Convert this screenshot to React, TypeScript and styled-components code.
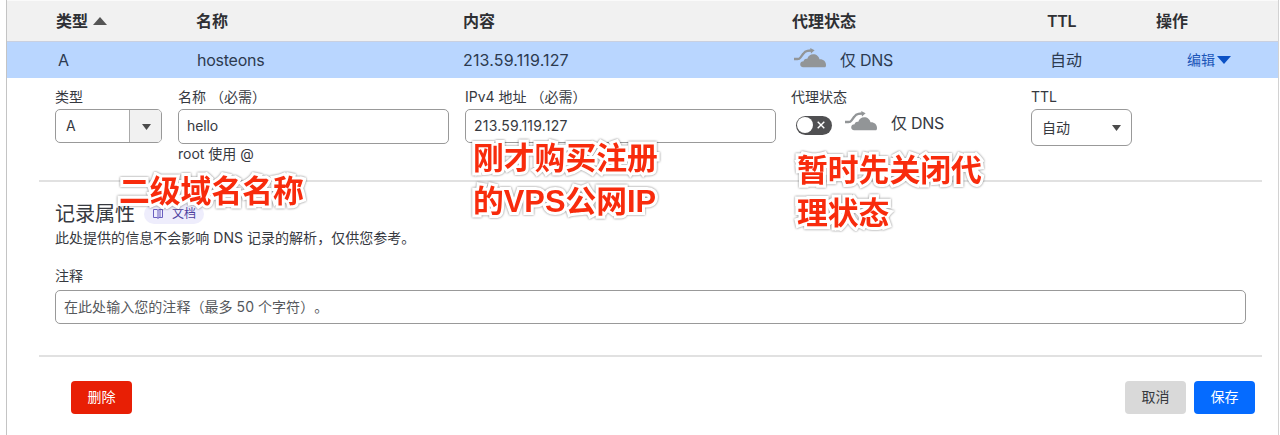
import React from 'react';
import styled, { createGlobalStyle } from 'styled-components';

const GlobalStyle = createGlobalStyle`
  *, *::before, *::after { box-sizing: border-box; }
  body {
    margin: 0;
    background: #fff;
    color: #36393f;
    font-family: Inter, 'Noto Sans CJK SC', sans-serif;
    font-size: 14px;
    line-height: 20px;
    text-spacing-trim: space-all;
    overflow: hidden;
  }
  input, button { font: inherit; color: inherit; margin: 0; }
`;

const Page = styled.main`
  position: relative;
  height: 435px;
  padding: 0 1px 0 6px;
  overflow: hidden;
`;

const Panel = styled.section`
  height: 435px;
  border-left: 1px solid #c4c4c4;
  border-right: 1px solid #d2d2d2;
`;

const Row = styled.div`
  display: grid;
  grid-template-columns: 140px 266px 329px 255px 109px 1fr;
  align-items: center;
  padding-left: 50px;
  font-size: 16px;
  line-height: 24px;
`;

const HeaderRow = styled(Row)`
  height: 42px;
  padding-left: 49px;
  border-top: 1px solid #fafafa;
  border-bottom: 1px solid #c9d0e0;
  background: #f1f1f1;
  color: #2f3034;
  font-weight: 600;
`;

const RecordRow = styled(Row)`
  height: 36px;
  background: #b9d6ff;
  color: #2c3a50;
`;

const Cell = styled.div<{ $indent?: number; $tracking?: number }>`
  display: flex;
  align-items: center;
  padding-left: ${({ $indent = 0 }) => $indent}px;
  letter-spacing: ${({ $tracking = 0 }) => $tracking}px;
  white-space: nowrap;
`;

const EditLink = styled.a`
  display: flex;
  align-items: center;
  gap: 2px;
  color: #1b55b8;
  font-size: 14px;
`;

const Triangle = styled.svg<{ $w: number; $h: number }>`
  display: block;
  flex: none;
  width: ${({ $w }) => $w}px;
  height: ${({ $h }) => $h}px;
`;

const HeaderLabel = styled.span`
  display: flex;
  align-items: center;
  gap: 5px;
`;

const Status = styled.div`
  display: flex;
  align-items: center;
  gap: 13px;
  font-size: 16px;
  line-height: 24px;
  letter-spacing: -0.3px;
`;

const CloudSvg = styled.svg`
  display: block;
  width: 33px;
  height: 21px;
  margin-top: -5px;
`;

const Form = styled.div`
  margin: 0 16px 0 32px;
`;

const Fields = styled.div`
  display: flex;
  align-items: flex-start;
  height: 104px;
  padding: 9px 0 0 16px;
  border-bottom: 2px solid #e1e1e1;
`;

const Field = styled.div<{ $w: number; $gap: number }>`
  flex: none;
  width: ${({ $w }) => $w}px;
  margin-right: ${({ $gap }) => $gap}px;
  white-space: nowrap;
`;

const Label = styled.label`
  display: block;
  height: 22px;
`;

const TextInput = styled.input<{ $h?: number; $tracking?: number }>`
  display: block;
  width: 100%;
  height: ${({ $h = 34 }) => $h}px;
  padding: 0 8px 1px;
  border: 1px solid #999;
  border-radius: 5px;
  background: #fff;
  letter-spacing: ${({ $tracking = 0 }) => $tracking}px;
  text-spacing-trim: space-all;
  outline: none;
  &::placeholder { color: #55585c; opacity: 1; }
`;

const NameInput = styled(TextInput)`
  padding-bottom: 2px;
`;

const ComboBox = styled.div`
  display: flex;
  height: 34px;
  border: 1px solid #999;
  border-radius: 5px;
  overflow: hidden;
`;

const ComboValue = styled.span`
  flex: 1;
  padding: 6px 0 0 10px;
`;

const ComboToggle = styled.button`
  display: flex;
  align-items: center;
  justify-content: center;
  width: 32px;
  padding: 2px 0 0 1px;
  border: 0;
  border-left: 1px solid #aaa;
  background: #f1f1f1;
`;

const Select = styled.div`
  display: flex;
  align-items: center;
  justify-content: space-between;
  height: 37px;
  padding: 0 10px 0 10px;
  border: 1px solid #999;
  border-radius: 6px;
`;

const Hint = styled.div`
  color: #36393f;
`;

const ProxyControls = styled.div`
  display: flex;
  align-items: center;
  padding: 0 0 0 5px;
  height: 28px;
`;

const Toggle = styled.button`
  display: flex;
  align-items: center;
  justify-content: space-between;
  width: 36px;
  height: 19px;
  margin: 4px 13px 0 0;
  padding: 0 7px 0 1px;
  border: 0;
  border-radius: 10px;
  background: #505052;
`;

const Knob = styled.span`
  width: 16px;
  height: 16px;
  border-radius: 50%;
  background: #fff;
`;

const Attributes = styled.div`
  height: 175px;
  padding: 17px 16px 0;
  border-bottom: 2px solid #e1e1e1;
`;

const TitleLine = styled.div`
  display: flex;
  align-items: center;
  height: 29px;
  gap: 9px;
`;

const Title = styled.h2`
  margin: 0;
  font-size: 20px;
  font-weight: 400;
  line-height: 28px;
`;

const DocsBadge = styled.a`
  display: flex;
  align-items: center;
  gap: 8px;
  height: 20px;
  padding: 0 8px;
  border-radius: 10px;
  background: #eeedfc;
  color: #4d3f9f;
  font-size: 12px;
`;

const Description = styled.p`
  margin: 0 0 17px;
  letter-spacing: 0.03px;
`;

const CommentLabel = styled(Label)`
  height: 25px;
  padding-top: 1px;
`;

const Actions = styled.div`
  display: flex;
  gap: 8px;
  padding: 24px 7px 0 32px;
`;

const Button = styled.button<{ $bg: string; $color: string; $first?: boolean }>`
  width: 61px;
  height: 33px;
  padding: 0 0 2px;
  margin-right: ${({ $first }) => ($first ? 'auto' : '0')};
  border: 0;
  border-radius: 4px;
  background: ${({ $bg }) => $bg};
  color: ${({ $color }) => $color};
`;

const Annotation = styled.div<{ $x: number; $y: number }>`
  position: absolute;
  left: ${({ $x }) => $x}px;
  top: ${({ $y }) => $y}px;
  color: #f82b0c;
  font-family: 'Liberation Sans', 'Noto Sans CJK SC', sans-serif;
  font-size: 30.8px;
  font-weight: 700;
  line-height: 43px;
  white-space: pre;
  -webkit-text-stroke: 6px #fff;
  paint-order: stroke fill;
  filter: drop-shadow(0 0 1px rgba(0, 0, 0, 0.5));
`;

function Caret({ w, h, color, up }: { w: number; h: number; color: string; up?: boolean }) {
  return (
    <Triangle $w={w} $h={h} viewBox="0 0 12 8" preserveAspectRatio="none" fill={color}>
      <path d={up ? 'M0 8 6 0l6 8Z' : 'M0 0h12L6 8Z'} />
    </Triangle>
  );
}

function CloudIcon() {
  return (
    <CloudSvg viewBox="0 0 33 21">
      <path
        d="M0 12h3.400c1.600 0 2.300-.4 3.200-1.700l2.600-3.500C10.300 5.200 11.500 4.200 13.500 3.900L17 3.500"
        fill="none"
        stroke="#929597"
        strokeWidth="2.300"
      />
      <path d="M16.200.9 20.600 3.300 17 6.500Z" fill="#929597" />
      <path
        d="M9.200 20.200c-2 0-3-1.300-3-2.900 0-1.900 1.400-3.100 3.400-3.100.2-1.900 1.900-3 3.700-2.400C14.200 9 16.400 7.300 19.200 7.300c3.300 0 5.700 2.100 6.300 5 3.700-.3 6.500 2.200 6.500 5.600 0 1.500-.5 2.300-1.500 2.300Z"
        fill="#929597"
      />
    </CloudSvg>
  );
}

export default function App() {
  return (
    <Page>
      <GlobalStyle />
      <Panel>
        <HeaderRow>
          <HeaderLabel>
            类型 <Caret w={14} h={8} color="#555" up />
          </HeaderLabel>
          <Cell>名称</Cell>
          <Cell $indent={1}>内容</Cell>
          <Cell $indent={1}>代理状态</Cell>
          <Cell $indent={1} $tracking={-0.3}>TTL</Cell>
          <Cell $indent={1}>操作</Cell>
        </HeaderRow>
        <RecordRow>
          <Cell $indent={1}>A</Cell>
          <Cell $tracking={-0.25}>hosteons</Cell>
          <Cell $tracking={0.15}>213.59.119.127</Cell>
          <Cell $indent={2}>
            <Status>
              <CloudIcon />
              <span>仅 DNS</span>
            </Status>
          </Cell>
          <Cell $indent={3}>自动</Cell>
          <Cell $indent={31}>
            <EditLink>
              编辑 <Caret w={14} h={8} color="#0b51c5" />
            </EditLink>
          </Cell>
        </RecordRow>
        <Form>
          <Fields>
            <Field $w={107} $gap={16}>
              <Label>类型</Label>
              <ComboBox>
                <ComboValue>A</ComboValue>
                <ComboToggle aria-label="类型">
                  <Caret w={9} h={6} color="#4b4b4b" />
                </ComboToggle>
              </ComboBox>
            </Field>
            <Field $w={271} $gap={16}>
              <Label>名称 （必需）</Label>
              <NameInput $h={35} $tracking={-0.1} defaultValue="hello" />
              <Hint>root 使用 @</Hint>
            </Field>
            <Field $w={311} $gap={15}>
              <Label>IPv4 地址 （必需）</Label>
              <TextInput $tracking={0.2} defaultValue="213.59.119.127" />
            </Field>
            <Field $w={223} $gap={17}>
              <Label>代理状态</Label>
              <ProxyControls>
                <Toggle aria-label="代理状态">
                  <Knob />
                  <svg width="8" height="8" viewBox="0 0 8 8" stroke="#fff" strokeWidth="1.400">
                    <path d="m.7.7 6.600 6.600M7.300.7.7 7.300" />
                  </svg>
                </Toggle>
                <Status>
                  <CloudIcon />
                  <span>仅 DNS</span>
                </Status>
              </ProxyControls>
            </Field>
            <Field $w={101} $gap={0}>
              <Label>TTL</Label>
              <Select>
                自动 <Caret w={9} h={6} color="#4b4b4b" />
              </Select>
            </Field>
          </Fields>
          <Attributes>
            <TitleLine>
              <Title>记录属性</Title>
              <DocsBadge>
                <svg width="12" height="12" viewBox="0 0 12 12" fill="none" stroke="#6a5fc0" strokeWidth="1">
                  <path d="M1.500 1.500H5l1 .8 1-.8h3.500v8H7l-1 .9-1-.9H1.500ZM6 2.300v8M8 1.500v8" />
                </svg>
                文档
              </DocsBadge>
            </TitleLine>
            <Description>此处提供的信息不会影响 DNS 记录的解析，仅供您参考。</Description>
            <CommentLabel>注释</CommentLabel>
            <TextInput $tracking={0.05} placeholder="在此处输入您的注释（最多 50 个字符）。" />
          </Attributes>
          <Actions>
            <Button $bg="#e81f05" $color="#fff" $first>删除</Button>
            <Button $bg="#d9d9d9" $color="#36393f">取消</Button>
            <Button $bg="#056bff" $color="#fff">保存</Button>
          </Actions>
        </Form>
      </Panel>
      <Annotation $x={119} $y={170}>二级域名名称</Annotation>
      <Annotation $x={473} $y={137}>{'刚才购买注册\n的VPS公网IP'}</Annotation>
      <Annotation $x={797} $y={149}>{'暂时先关闭代\n理状态'}</Annotation>
    </Page>
  );
}
